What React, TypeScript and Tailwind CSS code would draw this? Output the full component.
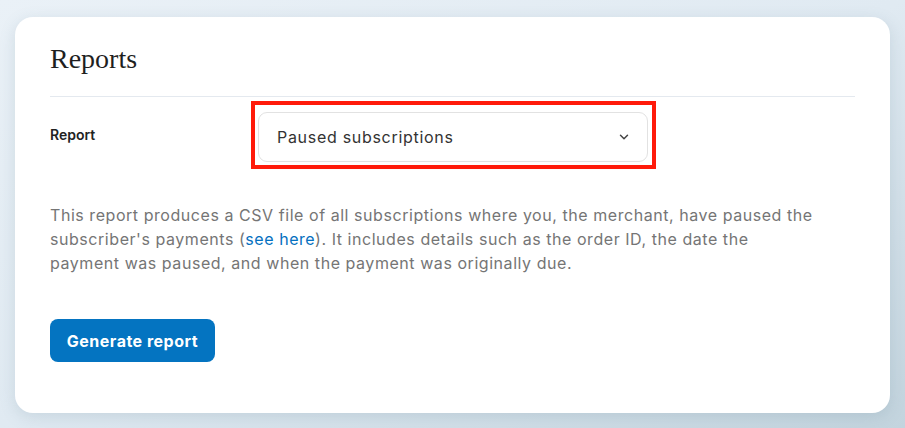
import { ChevronDown } from 'lucide-react';

export default function App() {
  return (
    <div className="h-[428px] w-[905px] overflow-hidden bg-gradient-to-br from-[#eaf1f7] via-[#e0eaf2] to-[#c3d4de] pl-[15px] pt-[17px]">
      <div className="h-[396px] w-[875px] rounded-[18px] bg-white px-[35px] pt-[25px] shadow-[0_4px_16px_rgba(90,120,140,0.18)] font-['Inter',sans-serif]">
        <h1 className="font-['Liberation_Serif',serif] text-[28px] leading-[33px] text-[#1f1f1f]">Reports</h1>
        <div className="mt-[21px] h-px w-[805px] bg-[#e4e9ef]" />

        <div className="mt-[4px] flex items-start">
          <div className="w-[201px] pt-[24px] text-[14px] font-semibold leading-[20px] text-[#222]">Report</div>
          <div className="h-[68px] w-[405px] border-4 border-[#ff1a0a] p-[7px] pl-[3px]">
            <div className="flex h-[50px] w-[390px] items-center justify-between rounded-[9px] border border-[#e2e2e2] pl-[18px] pr-[16px]">
              <span className="text-[16px] tracking-[0.7px] text-[#333]">Paused subscriptions</span>
              <ChevronDown className="h-[14px] w-[14px] text-[#444]" strokeWidth={2.5} />
            </div>
          </div>
        </div>

        <p className="mt-[34px] w-[800px] text-[16px] leading-[24px] tracking-[0.55px] text-[#757575]">
          This report produces a CSV file of all subscriptions where you, the merchant, have paused the
          <br />
          subscriber's payments (<span className="text-[#0570c0]">see here</span>). It includes details such as the order
          ID, the date the
          <br />
          payment was paused, and when the payment was originally due.
        </p>

        <button className="mt-[44px] h-[43px] w-[165px] rounded-[8px] bg-[#0474c1] text-[16px] font-bold tracking-[0.5px] text-white">
          Generate report
        </button>
      </div>
    </div>
  );
}
